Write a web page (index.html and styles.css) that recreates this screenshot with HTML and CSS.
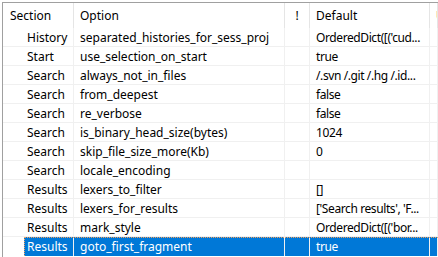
FILE: index.html
```html
<!DOCTYPE html>
<html>
<head>
    <title>Options</title>
    <link rel="stylesheet" href="styles.css">
</head>
<body>
    <div class="list">
        <div class="row head">
            <div class="cell sec">Section</div>
            <div class="cell">Option</div>
            <div class="cell bang">!</div>
            <div class="cell">Default</div>
            <div class="cell">User</div>
        </div>
        <div class="row"><div class="cell sec"><span>History</span></div><div class="cell">separated_histories_for_sess_proj</div><div class="cell"></div><div class="cell def">OrderedDict([('cud...</div><div class="cell"></div></div>
        <div class="row"><div class="cell sec"><span>Start</span></div><div class="cell">use_selection_on_start</div><div class="cell"></div><div class="cell def">true</div><div class="cell"></div></div>
        <div class="row"><div class="cell sec"><span>Search</span></div><div class="cell">always_not_in_files</div><div class="cell"></div><div class="cell def">/.svn /.git /.hg /.id...</div><div class="cell"></div></div>
        <div class="row"><div class="cell sec"><span>Search</span></div><div class="cell">from_deepest</div><div class="cell"></div><div class="cell def">false</div><div class="cell"></div></div>
        <div class="row"><div class="cell sec"><span>Search</span></div><div class="cell">re_verbose</div><div class="cell"></div><div class="cell def">false</div><div class="cell"></div></div>
        <div class="row"><div class="cell sec"><span>Search</span></div><div class="cell">is_binary_head_size(bytes)</div><div class="cell"></div><div class="cell def">1024</div><div class="cell"></div></div>
        <div class="row"><div class="cell sec"><span>Search</span></div><div class="cell">skip_file_size_more(Kb)</div><div class="cell"></div><div class="cell def">0</div><div class="cell"></div></div>
        <div class="row"><div class="cell sec"><span>Search</span></div><div class="cell">locale_encoding</div><div class="cell"></div><div class="cell def"></div><div class="cell"></div></div>
        <div class="row"><div class="cell sec"><span>Results</span></div><div class="cell">lexers_to_filter</div><div class="cell"></div><div class="cell def">[]</div><div class="cell"></div></div>
        <div class="row"><div class="cell sec"><span>Results</span></div><div class="cell">lexers_for_results</div><div class="cell"></div><div class="cell def">['Search results', 'F...</div><div class="cell"></div></div>
        <div class="row"><div class="cell sec"><span>Results</span></div><div class="cell">mark_style</div><div class="cell"></div><div class="cell def">OrderedDict([('bor...</div><div class="cell"></div></div>
        <div class="row selected"><div class="cell sec"><span>Results</span></div><div class="cell">goto_first_fragment</div><div class="cell"></div><div class="cell def">true</div><div class="cell"></div></div>
    </div>
</body>
</html>
```

FILE: styles.css
```css
body {
    margin: 0;
    padding: 2px 0 0 2px;
    background-color: #fff;
    font-family: "Noto Sans", sans-serif;
    font-size: 12px;
    color: #000;
    overflow: hidden;
    height: 257px;
    box-sizing: border-box;
}
.list {
    border-top: 1px solid #a0a0a0;
    border-left: 1px solid #a0a0a0;
    height: 100%;
}
.row {
    display: grid;
    grid-template-columns: 71px 211px 25px 120px 1fr;
    height: 19px;
    border-bottom: 1px solid #f0f0f0;
    box-sizing: border-box;
    position: relative;
}
.cell {
    padding-left: 6px;
    line-height: 19px;
    white-space: nowrap;
    overflow: hidden;
    border-right: 1px solid #f0f0f0;
}
.cell.def {
    letter-spacing: -0.4px;
}
.cell.sec {
    padding-left: 21px;
}
.cell.sec span {
    display: block;
    padding-left: 3px;
}
.head {
    height: 25px;
    border-bottom: none;
}
.head .cell {
    line-height: 25px;
    border-right: 1px solid #e5e5e5;
}
.head .cell.sec {
    padding-left: 7px;
}
.head .bang {
    padding-left: 0;
    text-align: center;
}

/* selected row: blue from the text column on, dotted focus frame */
.selected {
    background: linear-gradient(to right, #fff 21px, #0078d7 21px);
    color: #fff;
    border-bottom: none;
}
.selected::after {
    content: "";
    position: absolute;
    left: 21px;
    right: 0;
    top: 0;
    bottom: 0;
    border: 1px dotted #f2a160;
    border-right: none;
    border-bottom: none;
}
```
